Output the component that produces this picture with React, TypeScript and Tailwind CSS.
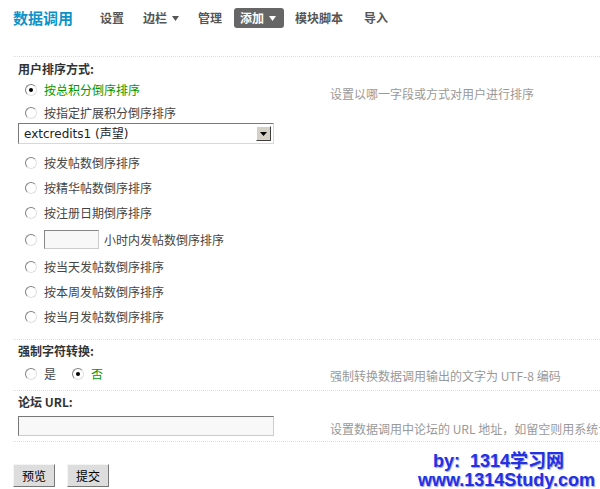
import React from "react";

const font = "font-['Noto_Sans_CJK_SC','Liberation_Sans',sans-serif]";

function Radio({ checked = false }: { checked?: boolean }) {
  return (
    <span className="relative inline-flex h-[12px] w-[12px] shrink-0 items-center justify-center rounded-full border border-t-[#808080] border-l-[#808080] border-b-[#e0e0e0] border-r-[#e0e0e0] bg-white">
      {checked && <span className="h-[4px] w-[4px] rounded-full bg-black" />}
    </span>
  );
}

function Option({ label, checked = false, h = "h-[25px]" }: { label: string; checked?: boolean; h?: string }) {
  return (
    <div className={`flex items-center pl-[12px] ${h}`}>
      <Radio checked={checked} />
      <span className={`ml-[7px] text-[12px] ${checked ? "text-[#009900]" : "text-[#444]"}`}>{label}</span>
    </div>
  );
}

function Tip({ text, pt }: { text: string; pt: string }) {
  return <div className={`whitespace-nowrap text-[12px] leading-[14px] text-[#999] ${pt}`}>{text}</div>;
}

function Caret({ color }: { color: string }) {
  return (
    <svg className="ml-[5px]" width="7" height="5" viewBox="0 0 7 5">
      <path d="M0 0h7L3.5 5z" fill={color} />
    </svg>
  );
}

export default function App() {
  return (
    <div className={`relative h-[489px] w-[600px] overflow-hidden bg-white ${font}`}>
      {/* header */}
      <div className="flex h-[56px] items-start pl-[13px] pt-[8px]">
        <div className="flex h-[20px] items-center text-[15px] font-bold text-[#0e93c8]">数据调用</div>
        <div className="ml-[21px] flex items-center text-[12px] font-bold text-[#555]">
          <span className="flex h-[20px] items-center px-[6px]">设置</span>
          <span className="ml-[7px] flex h-[20px] items-center px-[6px]">
            边栏
            <Caret color="#555" />
          </span>
          <span className="ml-[7px] flex h-[20px] items-center px-[6px]">管理</span>
          <span className="ml-[6px] flex h-[20px] items-center rounded-[3px] bg-[#666] pl-[6px] pr-[8px] text-white">
            添加
            <Caret color="#fff" />
          </span>
          <span className="ml-[5px] flex h-[20px] items-center px-[6px]">模块脚本</span>
          <span className="ml-[9px] flex h-[20px] items-center px-[6px]">导入</span>
        </div>
      </div>

      <div className="pl-[13px]">
        {/* section 1 */}
        <div className="flex border-t border-dotted border-[#cfe0ee] pb-[10px]">
          <div className="w-[317px] shrink-0 pl-[5px]">
            <div className="pt-[4px] text-[12px] font-bold leading-[15px] text-[#333]">用户排序方式:</div>
            <div className="flex h-[25px] items-center pl-[7px] pt-[2px]">
              <Radio checked />
              <span className="ml-[7px] text-[12px] text-[#009900]">按总积分倒序排序</span>
            </div>
            <div className="flex h-[22px] items-center pl-[7px] pt-[2px]">
              <Radio />
              <span className="ml-[7px] text-[12px] text-[#444]">按指定扩展积分倒序排序</span>
            </div>
            <div className="flex h-[21px] w-[256px] items-center justify-between border border-t-[#7a7a7a] border-l-[#7a7a7a] border-b-[#d8d8d8] border-r-[#d8d8d8] bg-white pl-[5px] pr-[2px] text-[13px] text-[#222]">
              <span className="font-['DejaVu_Sans','Noto_Sans_CJK_SC',sans-serif] text-[12px]">extcredits1 (声望)</span>
              <span className="flex h-[15px] w-[15px] items-center justify-center border border-t-white border-l-white border-b-[#404040] border-r-[#404040] bg-[#d4d0c8]">
                <svg width="7" height="4" viewBox="0 0 7 4"><path d="M0 0h7L3.5 4z" fill="#000" /></svg>
              </span>
            </div>
            <div className="mt-[6px] -ml-[5px]">
              <Option label="按发帖数倒序排序" />
              <Option label="按精华帖数倒序排序" />
              <Option label="按注册日期倒序排序" />
              <div className="flex h-[29px] items-center pl-[12px]">
                <Radio />
                <span className="ml-[7px] h-[19px] w-[55px] border border-t-[#888] border-l-[#888] border-b-[#ccc] border-r-[#ccc] bg-[#f8f8f8]" />
                <span className="ml-[5px] text-[12px] text-[#444]">小时内发帖数倒序排序</span>
              </div>
              <Option label="按当天发帖数倒序排序" />
              <Option label="按本周发帖数倒序排序" />
              <Option label="按当月发帖数倒序排序" />
            </div>
          </div>
          <Tip text="设置以哪一字段或方式对用户进行排序" pt="pt-[30px]" />
        </div>

        {/* section 2 */}
        <div className="flex h-[51px] border-t border-dotted border-[#cfe0ee]">
          <div className="w-[317px] shrink-0 pl-[5px]">
            <div className="pt-[3px] text-[12px] font-bold leading-[15px] text-[#333]">强制字符转换:</div>
            <div className="-ml-[5px] mt-[4px] flex h-[24px] items-center pl-[12px] text-[12px]">
              <Radio />
              <span className="ml-[7px] text-[#444]">是</span>
              <span className="ml-[16px] flex"><Radio checked /></span>
              <span className="ml-[7px] text-[#009900]">否</span>
            </div>
          </div>
          <Tip text="强制转换数据调用输出的文字为 UTF-8 编码" pt="pt-[29px]" />
        </div>

        {/* section 3 */}
        <div className="flex h-[52px] border-t border-b border-dotted border-[#cfe0ee]">
          <div className="w-[317px] shrink-0 pl-[5px]">
            <div className="pt-[3px] text-[12px] font-bold leading-[15px] text-[#333]">论坛 URL:</div>
            <div className="mt-[7px] h-[20px] w-[256px] border border-t-[#777] border-l-[#777] border-b-[#ccc] border-r-[#ccc] bg-[#f8f8f8]" />
          </div>
          <Tip text="设置数据调用中论坛的 URL 地址，如留空则用系统设置" pt="pt-[31px]" />
        </div>

        {/* buttons */}
        <div className="mt-[22px] flex gap-[12px]">
          {["预览", "提交"].map((b) => (
            <button key={b} className="flex h-[23px] w-[42px] items-center justify-center border border-t-[#f4f4f4] border-l-[#f4f4f4] border-b-[#777] border-r-[#777] bg-[#ddd] text-[12px] text-black">
              {b}
            </button>
          ))}
        </div>
      </div>

      {/* watermark */}
      <div className="absolute right-[5px] top-[451px] flex flex-col items-end font-bold leading-none text-[#2330e6] [text-shadow:1px_1px_1px_#9aa4d8] font-['Liberation_Sans','Noto_Sans_CJK_SC',sans-serif]">
        <div className="mr-[31px] text-[18px] leading-[20px]">by:&nbsp;&nbsp;1314学习网</div>
        <div className="text-[18px] leading-[19px]">www.1314Study.com</div>
      </div>
    </div>
  );
}
